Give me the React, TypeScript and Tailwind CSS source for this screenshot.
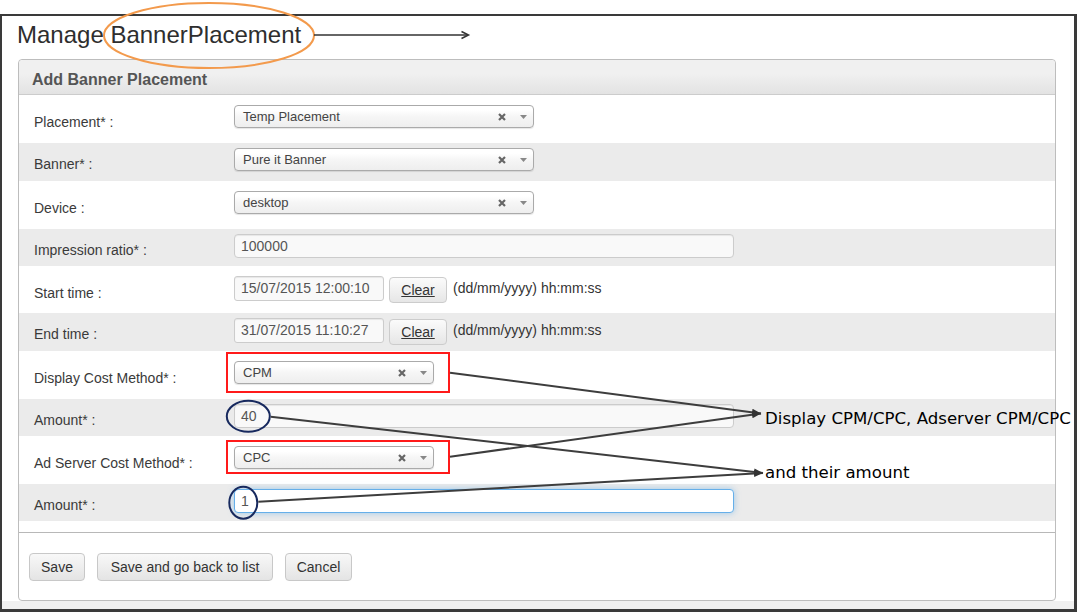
import React from "react";

const XIcon = () => (
  <svg width="8" height="8" viewBox="0 0 8 8" className="shrink-0">
    <path d="M1 1L7 7M7 1L1 7" stroke="#666666" strokeWidth="2.2" />
  </svg>
);

const Caret = () => (
  <svg width="7" height="4" viewBox="0 0 7 4" className="shrink-0">
    <path d="M0 0H7L3.5 4Z" fill="#888888" />
  </svg>
);

function Select({ value, wide }: { value: string; wide?: boolean }) {
  return (
    <div
      className={`${wide ? "w-[300px]" : "w-[200px]"} h-[23px] flex items-center pl-[8px] pr-[6px] rounded-[4px] border border-[#aaaaaa] bg-linear-to-b from-white from-20% via-[#f6f6f6] via-50% to-[#eeeeee] shadow-[0_1px_1px_rgba(0,0,0,0.1)] text-[13px] text-[#444444]`}
    >
      <span className="flex-1 leading-[21px] whitespace-nowrap">{value}</span>
      <XIcon />
      <span className="w-[14px] shrink-0" />
      <Caret />
    </div>
  );
}

function TextInput({ value, focus }: { value: string; focus?: boolean }) {
  return (
    <div
      className={`w-[500px] h-[24px] flex items-center pl-[6px] rounded-[4px] border text-[14px] text-[#555555] ${
        focus
          ? "bg-white border-[#66afe9] shadow-[0_0_6px_rgba(102,175,233,0.6)]"
          : "bg-[#f9f9f9] border-[#cccccc] shadow-[inset_0_1px_1px_rgba(0,0,0,0.075)]"
      }`}
    >
      {value}
    </div>
  );
}

function DateField({ value }: { value: string }) {
  return (
    <div className="flex items-start">
      <div className="w-[150px] h-[25px] flex items-center pl-[6px] rounded-[3px] border border-[#cccccc] bg-[#f9f9f9] text-[14px] text-[#555555] shadow-[inset_0_1px_1px_rgba(0,0,0,0.075)]">
        {value}
      </div>
      <div className="ml-[5px] mt-[1px] w-[58px] h-[26px] flex items-center justify-center rounded-[4px] border border-[#cccccc] bg-linear-to-b from-[#fbfbfb] to-[#e6e6e6] text-[14px] text-[#333333] underline">
        Clear
      </div>
      <div className="ml-[6px] leading-[25px] text-[14px] text-[#333333]">(dd/mm/yyyy) hh:mm:ss</div>
    </div>
  );
}

type RowDef = {
  label: string;
  gray: boolean;
  h: string;
  field: React.ReactNode;
};

const rows: RowDef[] = [
  { label: "Placement* :", gray: false, h: "h-[48px]", field: <Select value="Temp Placement" wide /> },
  { label: "Banner* :", gray: true, h: "h-[38px]", field: <Select value="Pure it Banner" wide /> },
  { label: "Device :", gray: false, h: "h-[48px]", field: <Select value="desktop" wide /> },
  { label: "Impression ratio* :", gray: true, h: "h-[37px]", field: <TextInput value="100000" /> },
  { label: "Start time :", gray: false, h: "h-[47px]", field: <DateField value="15/07/2015 12:00:10" /> },
  { label: "End time :", gray: true, h: "h-[38px]", field: <DateField value="31/07/2015 11:10:27" /> },
  { label: "Display Cost Method* :", gray: false, h: "h-[48px]", field: <Select value="CPM" /> },
  { label: "Amount* :", gray: true, h: "h-[37px]", field: <TextInput value="40" /> },
  { label: "Ad Server Cost Method* :", gray: false, h: "h-[48px]", field: <Select value="CPC" /> },
  { label: "Amount* :", gray: true, h: "h-[37px]", field: <TextInput value="1" focus /> },
];

function Btn({ children, w }: { children: React.ReactNode; w: string }) {
  return (
    <div
      className={`${w} h-[28px] flex items-center justify-center rounded-[4px] border border-[#c8c8c8] bg-linear-to-b from-[#f8f8f8] to-[#e4e4e4] text-[14px] text-[#333333]`}
    >
      {children}
    </div>
  );
}

export default function App() {
  return (
    <div className="relative w-[1077px] h-[612px] bg-white overflow-hidden pt-[14px] font-['Liberation_Sans',Arial,sans-serif]">
      <div className="h-[598px] border-l-2 border-t-2 border-r-[3px] border-b-[3px] border-[#3a3a3a] flex flex-col">
        <div className="h-[43px] shrink-0 pt-[5px] pl-[15px] text-[24px] leading-[28px] text-[#2e2e2e]">Manage BannerPlacement</div>
        <div className="ml-[16px] w-[1038px] h-[542px] shrink-0 flex flex-col border border-[#bdbdbd] rounded-[4px] bg-white">
          <div className="h-[35px] shrink-0 pt-[10px] pl-[13px] border-b border-[#cccccc] rounded-t-[4px] bg-linear-to-b from-[#f0f0f0] from-40% to-[#e3e3e3] text-[16px] leading-[20px] font-bold text-[#555555]">
            Add Banner Placement
          </div>
          <div className="flex flex-col shrink-0">
            {rows.map((r, i) => (
              <div key={i} className={`${r.h} flex ${r.gray ? "bg-[#ebebeb]" : "bg-white"}`}>
                <div
                  className={`w-[215px] shrink-0 pl-[15px] text-[14px] leading-[20px] text-[#3a3a3a] ${
                    r.gray ? "pt-[11px]" : "pt-[17px]"
                  }`}
                >
                  {r.label}
                </div>
                <div className={r.gray ? "pt-[5px]" : "pt-[10px]"}>{r.field}</div>
              </div>
            ))}
          </div>
          <div className="h-[11px] shrink-0" />
          <div className="border-t border-[#b8b8b8] pt-[20px] pb-[18px] pl-[10px] flex gap-[12px]">
            <Btn w="w-[56px]">Save</Btn>
            <Btn w="w-[176px]">Save and go back to list</Btn>
            <Btn w="w-[67px]">Cancel</Btn>
          </div>
        </div>
        <div className="flex-1 bg-[#f0f0f0]" />
      </div>

      <svg className="absolute left-0 top-0 pointer-events-none" width="1077" height="612" viewBox="0 0 1077 612">
        <defs>
          <marker id="ah" viewBox="0 0 10 10" refX="10" refY="5" markerWidth="9" markerHeight="9" markerUnits="userSpaceOnUse" orient="auto">
            <path d="M0 1L10 5L0 9Z" fill="#333333" />
          </marker>
        </defs>
        <ellipse cx="209" cy="35.5" rx="105" ry="32.5" fill="none" stroke="#f39a4c" strokeWidth="2" />
        <line x1="314" y1="35" x2="468" y2="35" stroke="#333333" strokeWidth="1.5" />
        <polyline points="461.5,31.5 468.5,35 461.5,38.5" fill="none" stroke="#333333" strokeWidth="1.5" />

        <rect x="227" y="353" width="222" height="39" fill="none" stroke="#ff1a1a" strokeWidth="2" />
        <rect x="227" y="441" width="222" height="32" fill="none" stroke="#ff1a1a" strokeWidth="2" />

        <ellipse cx="248.3" cy="416.3" rx="21.5" ry="15.5" fill="none" stroke="#17295e" strokeWidth="2" />
        <ellipse cx="243.3" cy="502.7" rx="14" ry="16" fill="none" stroke="#17295e" strokeWidth="2" />

        <line x1="450" y1="372.7" x2="761" y2="413.5" stroke="#3d3d3d" strokeWidth="2" markerEnd="url(#ah)" />
        <line x1="270.7" y1="416.7" x2="763" y2="473" stroke="#3d3d3d" strokeWidth="2" markerEnd="url(#ah)" />
        <line x1="450" y1="456.7" x2="761" y2="413.5" stroke="#3d3d3d" strokeWidth="2" markerEnd="url(#ah)" />
        <line x1="258.3" y1="501.7" x2="763" y2="473" stroke="#3d3d3d" strokeWidth="2" markerEnd="url(#ah)" />
      </svg>

      <div className="absolute left-[765px] top-[409px] text-[16.6px] leading-[20px] text-black whitespace-nowrap font-['DejaVu_Sans',sans-serif]">
        Display CPM/CPC, Adserver CPM/CPC
      </div>
      <div className="absolute left-[765px] top-[463px] text-[16.6px] leading-[20px] text-black whitespace-nowrap font-['DejaVu_Sans',sans-serif]">
        and their amount
      </div>
    </div>
  );
}
